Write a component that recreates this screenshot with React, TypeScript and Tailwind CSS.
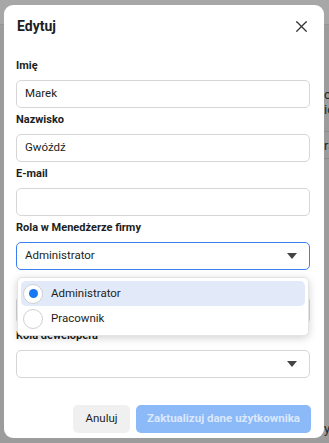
import { X } from 'lucide-react';

const FONT = { fontFamily: 'Roboto, "Noto Sans", Arial, sans-serif' };

function Caret() {
  return (
    <svg width="10" height="6" viewBox="0 0 10 6" className="shrink-0">
      <path d="M0 0h10L5 6z" fill="#444" />
    </svg>
  );
}

function Label({ text, hidden }: { text: string; hidden?: boolean }) {
  return (
    <div className={`text-[11px] leading-[16px] font-bold text-[#1c1e21] ${hidden ? 'invisible' : ''}`}>
      {text}
    </div>
  );
}

function Field({ label, value }: { label: string; value?: string }) {
  return (
    <div className="flex flex-col gap-[6px]">
      <Label text={label} />
      <div className="h-[28px] rounded-[5px] border border-[#d6d6d6] px-[8px] flex items-center text-[11.5px] text-[#1c1e21]">
        {value}
      </div>
    </div>
  );
}

function SelectField({
  label,
  value,
  active,
  hiddenLabel,
}: {
  label: string;
  value?: string;
  active?: boolean;
  hiddenLabel?: boolean;
}) {
  return (
    <div className="flex flex-col gap-[6px]">
      <Label text={label} hidden={hiddenLabel} />
      <div
        className={`h-[28px] rounded-[5px] border px-[8px] pr-[12px] flex items-center justify-between text-[11.5px] text-[#1c1e21] ${
          active ? 'border-[#3b7ff0]' : 'border-[#d6d6d6]'
        }`}
      >
        <span>{value}</span>
        <Caret />
      </div>
    </div>
  );
}

function Radio({ checked }: { checked?: boolean }) {
  return (
    <div className="w-[20px] h-[20px] rounded-full border border-[#d0d0d0] bg-white flex items-center justify-center">
      {checked && <div className="w-[9px] h-[9px] rounded-full bg-[#1877f2]" />}
    </div>
  );
}

export default function App() {
  return (
    <div className="relative w-[329px] h-[443px] overflow-hidden bg-[#9c9c9c]" style={FONT}>
      {/* Dimmed page behind */}
      <div className="h-[25px] bg-[#a7a7a7] border-b border-[#959595]" />
      <div className="flex flex-col pl-[324px] text-[13px] text-[#262626]">
        <div className="h-[62px]" />
        <div className="leading-[15px]">c</div>
        <div className="leading-[15px]">ió</div>
        <div className="h-[15px] border-b border-[#8c8c8c]" />
        <div className="h-[6px]" />
        <div className="leading-[16px]">ra</div>
        <div className="h-[5px] border-b border-[#8c8c8c]" />
        <div className="h-[263px]" />
        <div className="leading-[14px]">y</div>
      </div>

      {/* Modal */}
      <div className="absolute left-[4px] top-[5px] w-[320px] h-[433px] rounded-[9px] bg-white flex flex-col">
        <div className="flex items-center justify-between pl-[13px] pr-[13px] pt-[11px] h-[31px]">
          <div className="text-[14px] leading-[20px] font-bold text-[#1c1e21]">Edytuj</div>
          <X size={19} strokeWidth={1.6} className="text-[#333]" />
        </div>

        <div className="relative flex flex-col gap-[4px] pl-[12px] pr-[14px] mt-[22px]">
          <Field label="Imię" value="Marek" />
          <Field label="Nazwisko" value="Gwóźdź" />
          <Field label="E-mail" />
          <SelectField label="Rola w Menedżerze firmy" value="Administrator" active />
          <SelectField label="Rola w Menedżerze reklam" hiddenLabel />
          <SelectField label="Rola dewelopera" />

          {/* Open dropdown */}
          <div className="absolute left-[13px] top-[219px] w-[292px] h-[59px] rounded-[5px] bg-white border border-[#e4e4e4] shadow-[0_2px_8px_rgba(0,0,0,0.18)] p-[3px] flex flex-col">
            <div className="h-[25px] rounded-[5px] bg-[#e2eafa] flex items-center gap-[8px] pl-[2px] text-[11.5px] text-[#1c1e21]">
              <Radio checked />
              <span>Administrator</span>
            </div>
            <div className="h-[26px] flex items-center gap-[8px] pl-[2px] text-[11.5px] text-[#1c1e21]">
              <Radio />
              <span>Pracownik</span>
            </div>
          </div>
        </div>

        <div className="mt-auto flex justify-end gap-[6px] pr-[13px] pb-[5px]">
          <div className="h-[28px] w-[57px] rounded-[5px] bg-[#f0f0f0] flex items-center justify-center text-[11.5px] text-[#1c1e21]">
            Anuluj
          </div>
          <div className="h-[28px] w-[175px] rounded-[5px] bg-[#8cb9f8] flex items-center justify-center text-[11.5px] font-bold text-[#dbe8fc]">
            Zaktualizuj dane użytkownika
          </div>
        </div>
      </div>
    </div>
  );
}
